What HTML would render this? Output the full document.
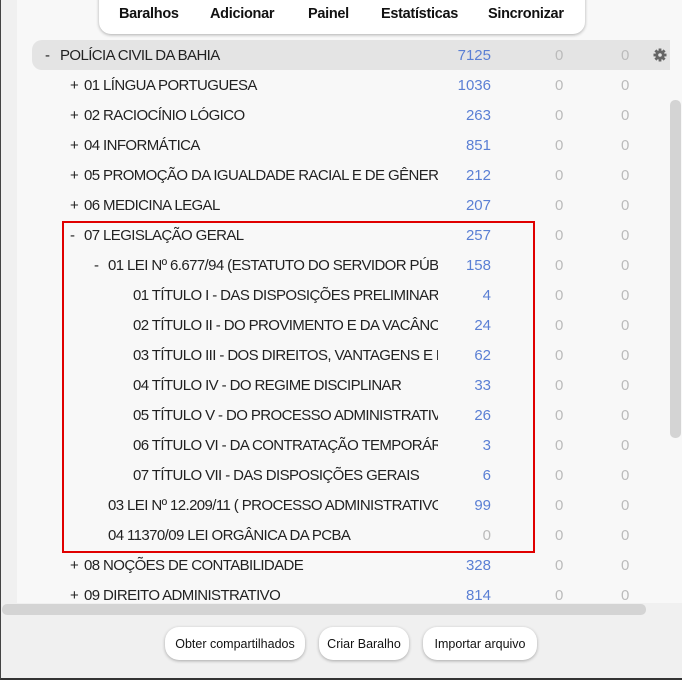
<!DOCTYPE html>
<html><head><meta charset="utf-8"><style>
*{margin:0;padding:0;box-sizing:border-box}
body{width:682px;height:680px;overflow:hidden;background:#f0f0f0;font-family:"Liberation Sans",sans-serif;position:relative}
.frame{position:absolute;left:0;top:0;width:682px;height:680px;border-left:1px solid #444;border-bottom:2px solid #333}
.panel{position:absolute;left:17px;top:0;width:653px;height:603px;background:#f8f8f8}
.right{position:absolute;left:670px;top:0;width:12px;height:603px;background:#f8f8f8}
.vs{position:absolute;left:670px;top:100px;width:11px;height:338px;background:#d4d4d4;border-radius:5px}
.hs{position:absolute;left:2px;top:604px;width:644px;height:11px;background:#d4d4d4;border-radius:5px}
.bar{position:absolute;left:99px;top:-6px;width:486px;height:40px;background:#fff;border-radius:0 0 12px 12px;box-shadow:0 1px 3px rgba(0,0,0,.3)}
.bar span{position:absolute;top:12px;font-weight:bold;font-size:14.5px;color:#111;letter-spacing:-0.3px}
.row{position:absolute;left:0;height:30px;width:670px;font-size:15px;letter-spacing:-0.6px;color:#222;line-height:32px}
.hl{position:absolute;left:32px;top:40px;width:638px;height:30px;background:#e4e4e4;border-radius:10px 0 0 10px}
.nm{position:absolute;top:0;height:30px;white-space:nowrap;overflow:hidden}
.n{position:absolute;right:179px;color:#5a7fd4;letter-spacing:0}
.z1{position:absolute;left:555px;color:#bbb;letter-spacing:0}
.z2{position:absolute;left:621px;color:#bbb;letter-spacing:0}
.sg{position:absolute;top:0}
.red{position:absolute;left:62px;top:221px;width:473px;height:332px;border:2px solid #e00000}
.btn{position:absolute;top:627px;height:33px;background:#fff;border-radius:14px;box-shadow:0 1px 3px rgba(0,0,0,.3);font-size:12.5px;line-height:34px;text-align:center;color:#111}
</style></head><body>
<div class="panel"></div><div class="right"></div>
<div class="hl"></div>
<div class="row" style="top:40px"><span class="sg" style="left:45px">-</span><span class="nm" style="left:60px;width:378px">POLÍCIA CIVIL DA BAHIA</span><span class="n">7125</span><span class="z1">0</span><span class="z2">0</span>
<svg style="position:absolute;left:653px;top:8px" width="14" height="14" viewBox="0 0 14 14"><g fill="#666"><circle cx="7" cy="7" r="4.6"/><rect x="5.6" y="0.5" width="2.8" height="13"/><rect x="5.6" y="0.5" width="2.8" height="13" transform="rotate(45 7 7)"/><rect x="5.6" y="0.5" width="2.8" height="13" transform="rotate(90 7 7)"/><rect x="5.6" y="0.5" width="2.8" height="13" transform="rotate(135 7 7)"/></g><circle cx="7" cy="7" r="1.8" fill="#e4e4e4"/></svg></div>

<div class="row" style="top:70px"><span class="sg" style="left:70px">+</span><span class="nm" style="left:84px;width:354px">01 LÍNGUA PORTUGUESA</span><span class="n">1036</span><span class="z1">0</span><span class="z2">0</span></div>
<div class="row" style="top:100px"><span class="sg" style="left:70px">+</span><span class="nm" style="left:84px;width:354px">02 RACIOCÍNIO LÓGICO</span><span class="n">263</span><span class="z1">0</span><span class="z2">0</span></div>
<div class="row" style="top:130px"><span class="sg" style="left:70px">+</span><span class="nm" style="left:84px;width:354px">04 INFORMÁTICA</span><span class="n">851</span><span class="z1">0</span><span class="z2">0</span></div>
<div class="row" style="top:160px"><span class="sg" style="left:70px">+</span><span class="nm" style="left:84px;width:354px">05 PROMOÇÃO DA IGUALDADE RACIAL E DE GÊNERO</span><span class="n">212</span><span class="z1">0</span><span class="z2">0</span></div>
<div class="row" style="top:190px"><span class="sg" style="left:70px">+</span><span class="nm" style="left:84px;width:354px">06 MEDICINA LEGAL</span><span class="n">207</span><span class="z1">0</span><span class="z2">0</span></div>
<div class="row" style="top:220px"><span class="sg" style="left:70px">-</span><span class="nm" style="left:84px;width:354px">07 LEGISLAÇÃO GERAL</span><span class="n">257</span><span class="z1">0</span><span class="z2">0</span></div>
<div class="row" style="top:250px"><span class="sg" style="left:94px">-</span><span class="nm" style="left:108px;width:330px">01 LEI Nº 6.677/94 (ESTATUTO DO SERVIDOR PÚBLICO)</span><span class="n">158</span><span class="z1">0</span><span class="z2">0</span></div>
<div class="row" style="top:280px"><span class="nm" style="left:133px;width:305px">01 TÍTULO I - DAS DISPOSIÇÕES PRELIMINARES</span><span class="n">4</span><span class="z1">0</span><span class="z2">0</span></div>
<div class="row" style="top:310px"><span class="nm" style="left:133px;width:305px">02 TÍTULO II - DO PROVIMENTO E DA VACÂNCIA</span><span class="n">24</span><span class="z1">0</span><span class="z2">0</span></div>
<div class="row" style="top:340px"><span class="nm" style="left:133px;width:305px">03 TÍTULO III - DOS DIREITOS, VANTAGENS E BENEFÍCIOS</span><span class="n">62</span><span class="z1">0</span><span class="z2">0</span></div>
<div class="row" style="top:370px"><span class="nm" style="left:133px;width:305px">04 TÍTULO IV - DO REGIME DISCIPLINAR</span><span class="n">33</span><span class="z1">0</span><span class="z2">0</span></div>
<div class="row" style="top:400px"><span class="nm" style="left:133px;width:305px">05 TÍTULO V - DO PROCESSO ADMINISTRATIVO</span><span class="n">26</span><span class="z1">0</span><span class="z2">0</span></div>
<div class="row" style="top:430px"><span class="nm" style="left:133px;width:305px">06 TÍTULO VI - DA CONTRATAÇÃO TEMPORÁRIA</span><span class="n">3</span><span class="z1">0</span><span class="z2">0</span></div>
<div class="row" style="top:460px"><span class="nm" style="left:133px;width:305px">07 TÍTULO VII - DAS DISPOSIÇÕES GERAIS</span><span class="n">6</span><span class="z1">0</span><span class="z2">0</span></div>
<div class="row" style="top:490px"><span class="nm" style="left:108px;width:330px">03 LEI Nº 12.209/11 ( PROCESSO ADMINISTRATIVO )</span><span class="n">99</span><span class="z1">0</span><span class="z2">0</span></div>
<div class="row" style="top:520px"><span class="nm" style="left:108px;width:330px">04 11370/09 LEI ORGÂNICA DA PCBA</span><span class="n" style="color:#bbb">0</span><span class="z1">0</span><span class="z2">0</span></div>
<div class="row" style="top:550px"><span class="sg" style="left:70px">+</span><span class="nm" style="left:84px;width:354px">08 NOÇÕES DE CONTABILIDADE</span><span class="n">328</span><span class="z1">0</span><span class="z2">0</span></div>
<div class="row" style="top:580px;height:23px;overflow:hidden"><span class="sg" style="left:70px">+</span><span class="nm" style="left:84px;width:354px">09 DIREITO ADMINISTRATIVO</span><span class="n">814</span><span class="z1">0</span><span class="z2">0</span></div>

<div class="red"></div>
<div class="bar"><span style="left:20px">Baralhos</span><span style="left:111px">Adicionar</span><span style="left:209px">Painel</span><span style="left:282px">Estatísticas</span><span style="left:389px">Sincronizar</span></div>
<div class="vs"></div><div class="hs"></div>
<div class="btn" style="left:165px;width:140px">Obter compartilhados</div>
<div class="btn" style="left:319px;width:90px">Criar Baralho</div>
<div class="btn" style="left:423px;width:114px">Importar arquivo</div>
<div class="frame"></div>
</body></html>
